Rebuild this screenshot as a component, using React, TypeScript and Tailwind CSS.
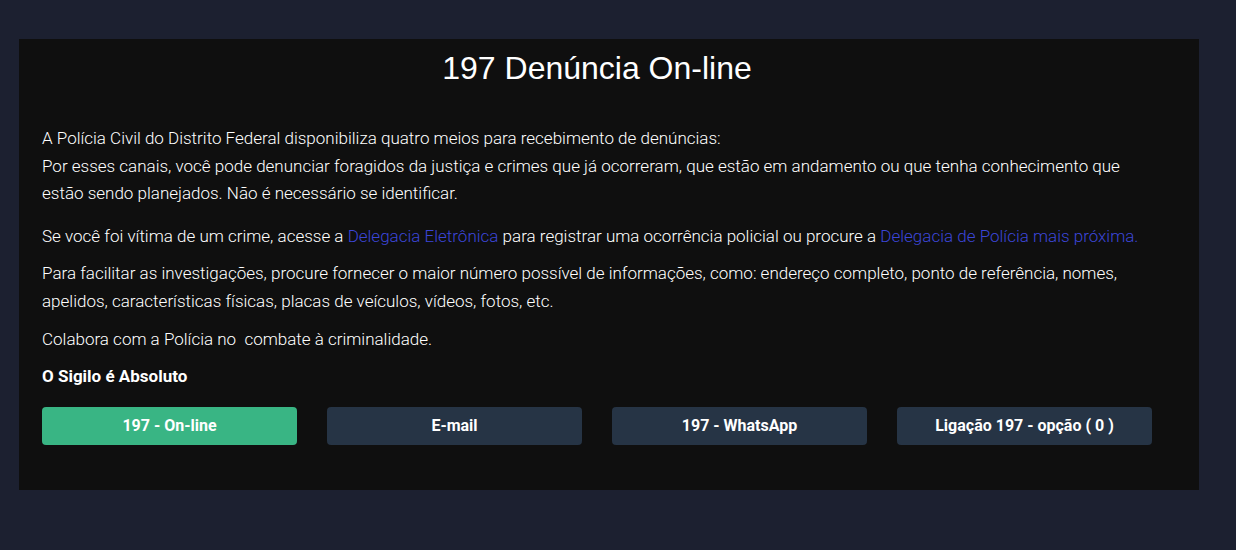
export default function App() {
  const buttons = [
    { label: '197 - On-line', active: true },
    { label: 'E-mail', active: false },
    { label: '197 - WhatsApp', active: false },
    { label: 'Ligação 197 - opção ( 0 )', active: false },
  ];

  return (
    <div className="min-h-[550px] bg-[#1c2030] pt-[39px] pl-[19px]">
      <div className="w-[1180px] h-[451px] bg-[#0f0f0f] pl-[23px]">
        <div className="w-[1110px]">
          <h1 className="pt-[9px] text-center text-[32px] leading-[40px] text-white font-['Liberation_Sans',Arial,sans-serif]">
            197 Denúncia On-line
          </h1>

          <div className="mt-[37px] text-[17px] leading-[27.5px] text-white font-light font-['Roboto',sans-serif]">
            <p>
              A Polícia Civil do Distrito Federal disponibiliza quatro meios para recebimento de denúncias:
              <br />
              Por esses canais, você pode denunciar foragidos da justiça e crimes que já ocorreram, que estão em
              andamento ou que tenha conhecimento que estão sendo planejados. Não é necessário se identificar.
            </p>
            <p className="mt-[15px]">
              Se você foi vítima de um crime, acesse a{' '}
              <a href="#" className="text-[#3c46d8]">
                Delegacia Eletrônica
              </a>{' '}
              para registrar uma ocorrência policial ou procure a{' '}
              <a href="#" className="text-[#3c46d8]">
                Delegacia de Polícia mais próxima.
              </a>
            </p>
            <p className="mt-[10px]">
              Para facilitar as investigações, procure fornecer o maior número possível de informações, como: endereço
              completo, ponto de referência, nomes, apelidos, características físicas, placas de veículos, vídeos,
              fotos, etc.
            </p>
            <p className="mt-[11px] whitespace-pre">Colabora com a Polícia no  combate à criminalidade.</p>
            <p className="mt-[9px] font-bold">O Sigilo é Absoluto</p>
          </div>

          <div className="mt-[17px] grid grid-cols-4 gap-[30px]">
            {buttons.map((b) => (
              <button
                key={b.label}
                className={`h-[38px] rounded-[4px] text-[16px] font-bold text-white font-['Roboto',sans-serif] ${
                  b.active ? 'bg-[#39b584]' : 'bg-[#263445]'
                }`}
              >
                {b.label}
              </button>
            ))}
          </div>
        </div>
      </div>
    </div>
  );
}
